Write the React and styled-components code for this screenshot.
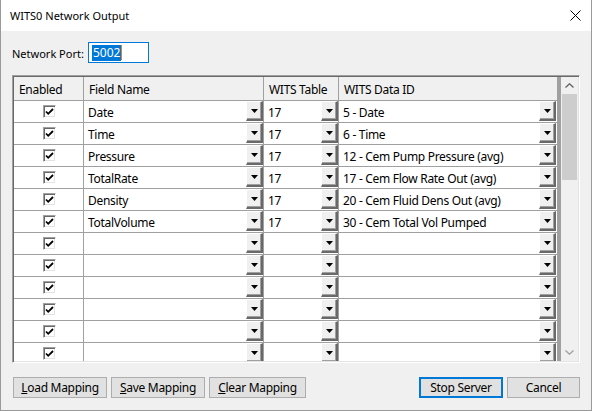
import React from "react"
import styled, { createGlobalStyle } from 'styled-components'

const rows = [
  { field: 'Date', table: '17', id: '5 - Date' },
  { field: 'Time', table: '17', id: '6 - Time' },
  { field: 'Pressure', table: '17', id: '12 - Cem Pump Pressure (avg)' },
  { field: 'TotalRate', table: '17', id: '17 - Cem Flow Rate Out (avg)' },
  { field: 'Density', table: '17', id: '20 - Cem Fluid Dens Out (avg)' },
  { field: 'TotalVolume', table: '17', id: '30 - Cem Total Vol Pumped' },
  {}, {}, {}, {}, {}, {},
]

const GlobalStyle = createGlobalStyle`
  html, body {
    margin: 0;
    padding: 0;
    background: #f0f0f0;
  }
  * { box-sizing: border-box; }
`

const Arrow = () => (
  <svg width="7" height="4" viewBox="0 0 7 4">
    <path d="M0 0h7L3.5 4z" fill="#000" />
  </svg>
)

const DropCell = ({ width, value, last }) => (
  <Cell width={width} last={last}>
    <CellText>{value}</CellText>
    <DropButton><Arrow /></DropButton>
  </Cell>
)

const App = () => {
  return (
    <>
      <GlobalStyle />
      <Window>
        <TitleBar>
          <span>WITS0 Network Output</span>
          <CloseIcon width="11" height="11" viewBox="0 0 11 11">
            <path d="M0.5 0.5L10.5 10.5M10.5 0.5L0.5 10.5" stroke="#000" strokeWidth="1" />
          </CloseIcon>
        </TitleBar>
        <Body>
          <PortRow>
            <Label>Network Port:</Label>
            <PortInput>
              <Selected>5002</Selected>
              <Caret />
            </PortInput>
          </PortRow>

          <Grid>
            <TableArea>
              <HeaderRow>
                <HeaderCell width={70}>Enabled</HeaderCell>
                <HeaderCell width={180}>Field Name</HeaderCell>
                <HeaderCell width={75}>WITS Table</HeaderCell>
                <HeaderCell width={218} last>WITS Data ID</HeaderCell>
              </HeaderRow>
              {rows.map((r, i) => (
                <Row key={i}>
                  <Cell width={70} center>
                    <CheckBox>
                      <svg width="9" height="8" viewBox="0 0 9 8">
                        <path d="M1 3.5L3.2 5.8L8 1" stroke="#000" strokeWidth="1.8" fill="none" />
                      </svg>
                    </CheckBox>
                  </Cell>
                  <DropCell width={180} value={r.field} />
                  <DropCell width={75} value={r.table} />
                  <DropCell width={218} value={r.id} last />
                </Row>
              ))}
            </TableArea>
            <Gap />
            <ScrollBar>
              <ScrollArrow>
                <svg width="9" height="5" viewBox="0 0 9 5">
                  <path d="M0.5 4.5L4.5 0.8L8.5 4.5" stroke="#606060" strokeWidth="1.3" fill="none" />
                </svg>
              </ScrollArrow>
              <Track>
                <Thumb />
              </Track>
              <ScrollArrow>
                <svg width="9" height="5" viewBox="0 0 9 5">
                  <path d="M0.5 0.5L4.5 4.2L8.5 0.5" stroke="#a0a0a0" strokeWidth="1.3" fill="none" />
                </svg>
              </ScrollArrow>
            </ScrollBar>
          </Grid>

          <ButtonRow>
            <Button width={94}><u>L</u>oad Mapping</Button>
            <Button width={94}><u>S</u>ave Mapping</Button>
            <Button width={97}><u>C</u>lear Mapping</Button>
            <Spacer />
            <Button width={84} primary>Stop Server</Button>
            <Button width={73}>Cancel</Button>
          </ButtonRow>
        </Body>
      </Window>
    </>
  )
}

const Window = styled.div`
  width: 592px;
  height: 411px;
  display: flex;
  flex-direction: column;
  background: #f0f0f0;
  border: 1px solid #9a9a9a;
  border-top: none;
  font-family: "Noto Sans", "Liberation Sans", sans-serif;
  font-size: 11px;
  color: #000;
  overflow: hidden;
`

const TitleBar = styled.div`
  height: 31px;
  flex: none;
  background: #fff;
  display: flex;
  align-items: center;
  justify-content: space-between;
  padding: 0 10px 0 9px;
  font-size: 11px;
`

const CloseIcon = styled.svg`
  display: block;
`

const Body = styled.div`
  flex: 1;
  display: flex;
  flex-direction: column;
  padding: 11px 10px 0 11px;
`

const PortRow = styled.div`
  display: flex;
  align-items: center;
  height: 21px;
`

const Label = styled.span`
  width: 76px;
  padding-top: 2px;
  white-space: nowrap;
`

const PortInput = styled.div`
  width: 61px;
  height: 21px;
  border: 1px solid #0078d7;
  background: #fff;
  display: flex;
  align-items: center;
  padding-left: 3px;
`

const Selected = styled.span`
  background: #0078d7;
  color: #fff;
  line-height: 16px;
  padding: 0 1px;
  font-size: 12px;
`

const Caret = styled.span`
  width: 1px;
  height: 15px;
  background: #e08020;
`

const Grid = styled.div`
  margin-top: 12px;
  width: 568px;
  height: 288px;
  display: flex;
  border-style: solid;
  border-width: 1px;
  border-color: #a0a0a0 #fff #fff #a0a0a0;
  box-shadow: inset 1px 1px 0 #696969, inset -1px -1px 0 #e3e3e3;
  padding: 1px;
  background: #fff;
`

const TableArea = styled.div`
  width: 543px;
  overflow: hidden;
  display: flex;
  flex-direction: column;
`

const HeaderRow = styled.div`
  display: flex;
  flex: none;
  height: 24px;
  background: #f0f0f0;
  border-bottom: 1px solid #a0a0a0;
`

const HeaderCell = styled.div`
  width: ${p => p.width}px;
  flex: none;
  padding: 1px 0 0 5px;
  display: flex;
  align-items: center;
  font-size: 12px;
  letter-spacing: -0.3px;
  border-right: 1px solid ${p => (p.last ? 'transparent' : '#a0a0a0')};
`

const Row = styled.div`
  display: flex;
  flex: none;
  height: 22px;
  background: #fff;
  border-bottom: 1px solid #a0a0a0;
`

const Cell = styled.div`
  width: ${p => p.width}px;
  flex: none;
  display: flex;
  align-items: stretch;
  justify-content: ${p => (p.center ? 'center' : 'space-between')};
  border-right: 1px solid ${p => (p.last ? 'transparent' : '#a0a0a0')};
  ${p => p.center && 'align-items: center;'}
`

const CellText = styled.span`
  padding: 2px 0 0 4px;
  display: flex;
  align-items: center;
  white-space: nowrap;
  font-size: 12px;
  letter-spacing: -0.3px;
`

const DropButton = styled.div`
  width: 17px;
  height: 20px;
  flex: none;
  display: flex;
  align-items: center;
  justify-content: center;
  padding-top: 1px;
  background: #f0f0f0;
  border-style: solid;
  border-width: 1px 2px 2px 1px;
  border-color: #fff #696969 #696969 #fff;
  box-shadow: inset -1px -1px 0 #a0a0a0;
`

const CheckBox = styled.div`
  width: 13px;
  height: 13px;
  margin-left: 1px;
  background: #fff;
  border-style: solid;
  border-width: 1px;
  border-color: #a0a0a0 #fff #fff #a0a0a0;
  box-shadow: inset 1px 1px 0 #696969, inset -1px -1px 0 #e3e3e3;
  display: flex;
  align-items: center;
  justify-content: center;
  padding: 1px 0 0 1px;
`

const Gap = styled.div`
  width: 4px;
  flex: none;
  background: #a0a0a0;
`

const ScrollBar = styled.div`
  width: 17px;
  flex: none;
  display: flex;
  flex-direction: column;
  background: #f0f0f0;
`

const ScrollArrow = styled.div`
  height: 17px;
  flex: none;
  display: flex;
  align-items: center;
  justify-content: center;
`

const Track = styled.div`
  flex: 1;
  padding: 0 1px;
`

const Thumb = styled.div`
  height: 86px;
  background: #cdcdcd;
`

const ButtonRow = styled.div`
  display: flex;
  gap: 4px;
  margin-top: 14px;
  padding-left: 1px;
  padding-right: 1px;
`

const Spacer = styled.div`
  flex: 1;
`

const Button = styled.button`
  width: ${p => p.width}px;
  height: 21px;
  padding: 0;
  font-family: inherit;
  font-size: 12px;
  letter-spacing: -0.3px;
  color: #000;
  background: #e1e1e1;
  border: ${p => (p.primary ? '2px solid #0078d7' : '1px solid #adadad')};
  u { text-decoration: underline; }
`

export default App
